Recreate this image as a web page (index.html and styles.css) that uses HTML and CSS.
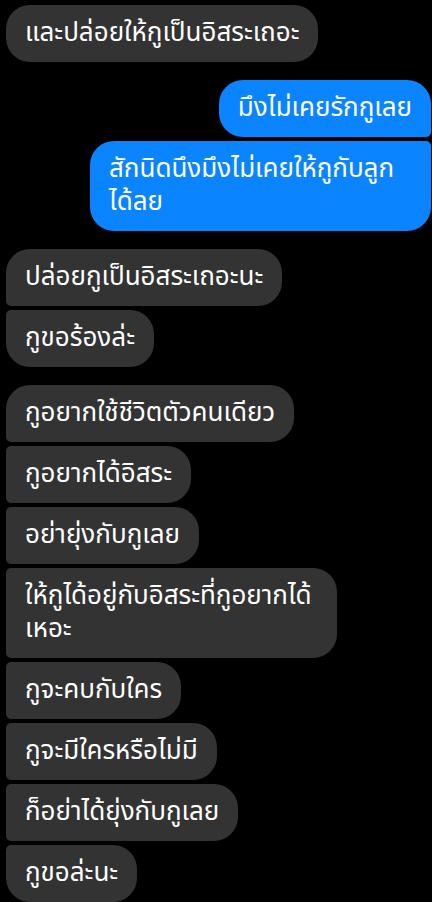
FILE: index.html
```html
<!DOCTYPE html>
<html lang="th">
<head>
  <meta charset="UTF-8">
  <meta name="viewport" content="width=device-width, initial-scale=1.0">
  <title>Chat</title>
  <link rel="stylesheet" href="styles.css">
</head>
<body>
  <div class="chat">
    <div class="group them">
      <div class="msg">และปล่อยให้กูเป็นอิสระเถอะ</div>
    </div>

    <div class="group me">
      <div class="msg">มึงไม่เคยรักกูเลย</div>
      <div class="msg wide">
        <span class="line">สักนิดนึงมึงไม่เคยให้กูกับลูก</span>
        <span class="line">ได้ลย</span>
      </div>
    </div>

    <div class="group them">
      <div class="msg">ปล่อยกูเป็นอิสระเถอะนะ</div>
      <div class="msg">กูขอร้องล่ะ</div>
    </div>

    <div class="group them">
      <div class="msg">กูอยากใช้ชีวิตตัวคนเดียว</div>
      <div class="msg">กูอยากได้อิสระ</div>
      <div class="msg">อย่ายุ่งกับกูเลย</div>
      <div class="msg wide">
        <span class="line">ให้กูได้อยู่กับอิสระที่กูอยากได้</span>
        <span class="line">เหอะ</span>
      </div>
      <div class="msg">กูจะคบกับใคร</div>
      <div class="msg">กูจะมีใครหรือไม่มี</div>
      <div class="msg">ก็อย่าได้ยุ่งกับกูเลย</div>
      <div class="msg">กูขอล่ะนะ</div>
    </div>
  </div>
</body>
</html>
```

FILE: styles.css
```css
body {
  margin: 0;
  background: #000;
  font-family: "Noto Sans Thai", "Noto Sans", sans-serif;
  overflow: hidden;
}

.chat {
  display: flex;
  flex-direction: column;
  gap: 18px;
  padding: 5px 1px 0 6px;
}

.group {
  display: flex;
  flex-direction: column;
  gap: 4px;
}

.them {
  align-items: flex-start;
}

.me {
  align-items: flex-end;
}

.msg {
  padding: 12px 19px;
  font-size: 26px;
  line-height: 33px;
  color: #fff;
  border-radius: 24px;
  white-space: nowrap;
}

.line {
  display: block;
}

.them .msg {
  background: #333333;
}

.me .msg {
  background: #0a84ff;
}

/* corners where bubbles of one sender touch */
.them .msg:not(:first-child) {
  border-top-left-radius: 5px;
}

.them .msg:not(:last-child) {
  border-bottom-left-radius: 5px;
}

.me .msg:not(:first-child) {
  border-top-right-radius: 5px;
}

.me .msg:not(:last-child) {
  border-bottom-right-radius: 5px;
}

.me .wide {
  width: 303px;
}

.them .wide {
  width: 293px;
}
```
